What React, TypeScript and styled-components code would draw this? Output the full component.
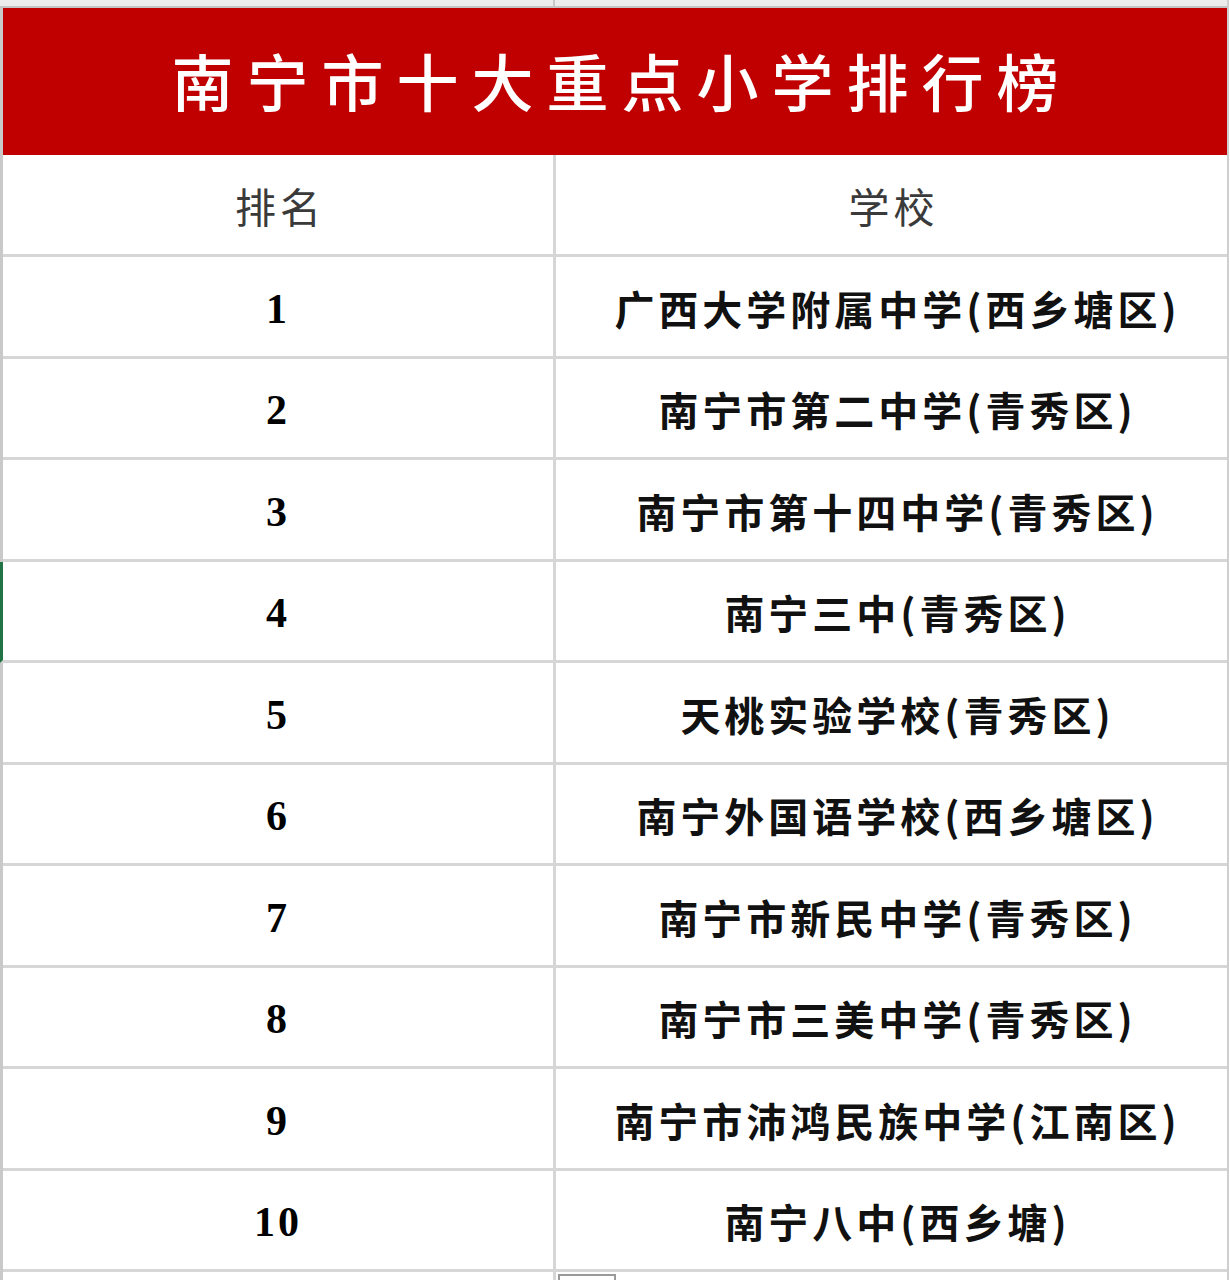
import styled, { createGlobalStyle } from 'styled-components'

const GlobalStyle = createGlobalStyle`
  html, body {
    margin: 0;
    padding: 0;
    background: #ffffff;
  }
  body {
    font-family: "Noto Sans CJK SC", "Noto Sans", sans-serif;
  }
`

const SCHOOLS = [
  '广西大学附属中学(西乡塘区)',
  '南宁市第二中学(青秀区)',
  '南宁市第十四中学(青秀区)',
  '南宁三中(青秀区)',
  '天桃实验学校(青秀区)',
  '南宁外国语学校(西乡塘区)',
  '南宁市新民中学(青秀区)',
  '南宁市三美中学(青秀区)',
  '南宁市沛鸿民族中学(江南区)',
  '南宁八中(西乡塘)',
]

const Sheet = styled.div`
  width: 1227px;
  border-right: 2px solid #cfcfcf;
  overflow: hidden;
  height: 1280px;
`

const TopStrip = styled.div`
  height: 6px;
  background: #ececec;
  border-bottom: 2px solid #c4c4c4;
  display: grid;
  grid-template-columns: 555px 1fr;
  & > div:first-child {
    border-right: 2px solid #c8c8c8;
  }
`

const Body = styled.div`
  border-left: 3px solid #c9c9c9;
`

const Title = styled.div`
  height: 147px;
  background: #c00000;
  color: #ffffff;
  display: flex;
  align-items: center;
  justify-content: center;
  font-size: 62px;
  font-weight: 500;
  letter-spacing: 13px;
  padding-left: 13px;
  padding-bottom: 4px;
  box-sizing: border-box;
`

const Row = styled.div<{ $height: number; $selected?: boolean }>`
  display: grid;
  grid-template-columns: 553px 1fr;
  height: ${(p) => p.$height}px;
  box-sizing: border-box;
  border-bottom: 3px solid #d6d6d6;
  margin-left: ${(p) => (p.$selected ? '-3px' : '0')};
  border-left: ${(p) => (p.$selected ? '3px solid #217346' : 'none')};
`

const Cell = styled.div`
  display: flex;
  align-items: center;
  justify-content: center;
  &:first-child {
    border-right: 3px solid #d6d6d6;
  }
`

const HeadLabel = styled.span`
  font-size: 41px;
  font-weight: 400;
  color: #3a3a3a;
  letter-spacing: 4px;
  padding-left: 4px;
`

const Rank = styled.span`
  font-family: "Liberation Serif", "DejaVu Serif", serif;
  font-weight: 700;
  font-size: 42px;
  color: #000000;
  letter-spacing: 3px;
  padding-top: 4px;
`

const School = styled.span`
  font-size: 40px;
  font-weight: 700;
  color: #111111;
  letter-spacing: 4px;
  padding-left: 12px;
  padding-top: 2px;
`

const Handle = styled.div`
  width: 58px;
  height: 12px;
  margin: 2px 0 0 2px;
  border: 2px solid #9a9a9a;
  border-bottom: none;
  box-sizing: border-box;
`

export default function App() {
  return (
    <>
      <GlobalStyle />
      <Sheet>
        <TopStrip>
          <div />
          <div />
        </TopStrip>
        <Body>
          <Title>南宁市十大重点小学排行榜</Title>
          <Row $height={102}>
            <Cell>
              <HeadLabel>排名</HeadLabel>
            </Cell>
            <Cell>
              <HeadLabel>学校</HeadLabel>
            </Cell>
          </Row>
          {SCHOOLS.map((name, i) => (
            <Row key={name} $height={i % 2 === 0 ? 102 : 101} $selected={i === 3}>
              <Cell>
                <Rank>{i + 1}</Rank>
              </Cell>
              <Cell>
                <School>{name}</School>
              </Cell>
            </Row>
          ))}
          <Row $height={40}>
            <Cell />
            <div>
              <Handle />
            </div>
          </Row>
        </Body>
      </Sheet>
    </>
  )
}
